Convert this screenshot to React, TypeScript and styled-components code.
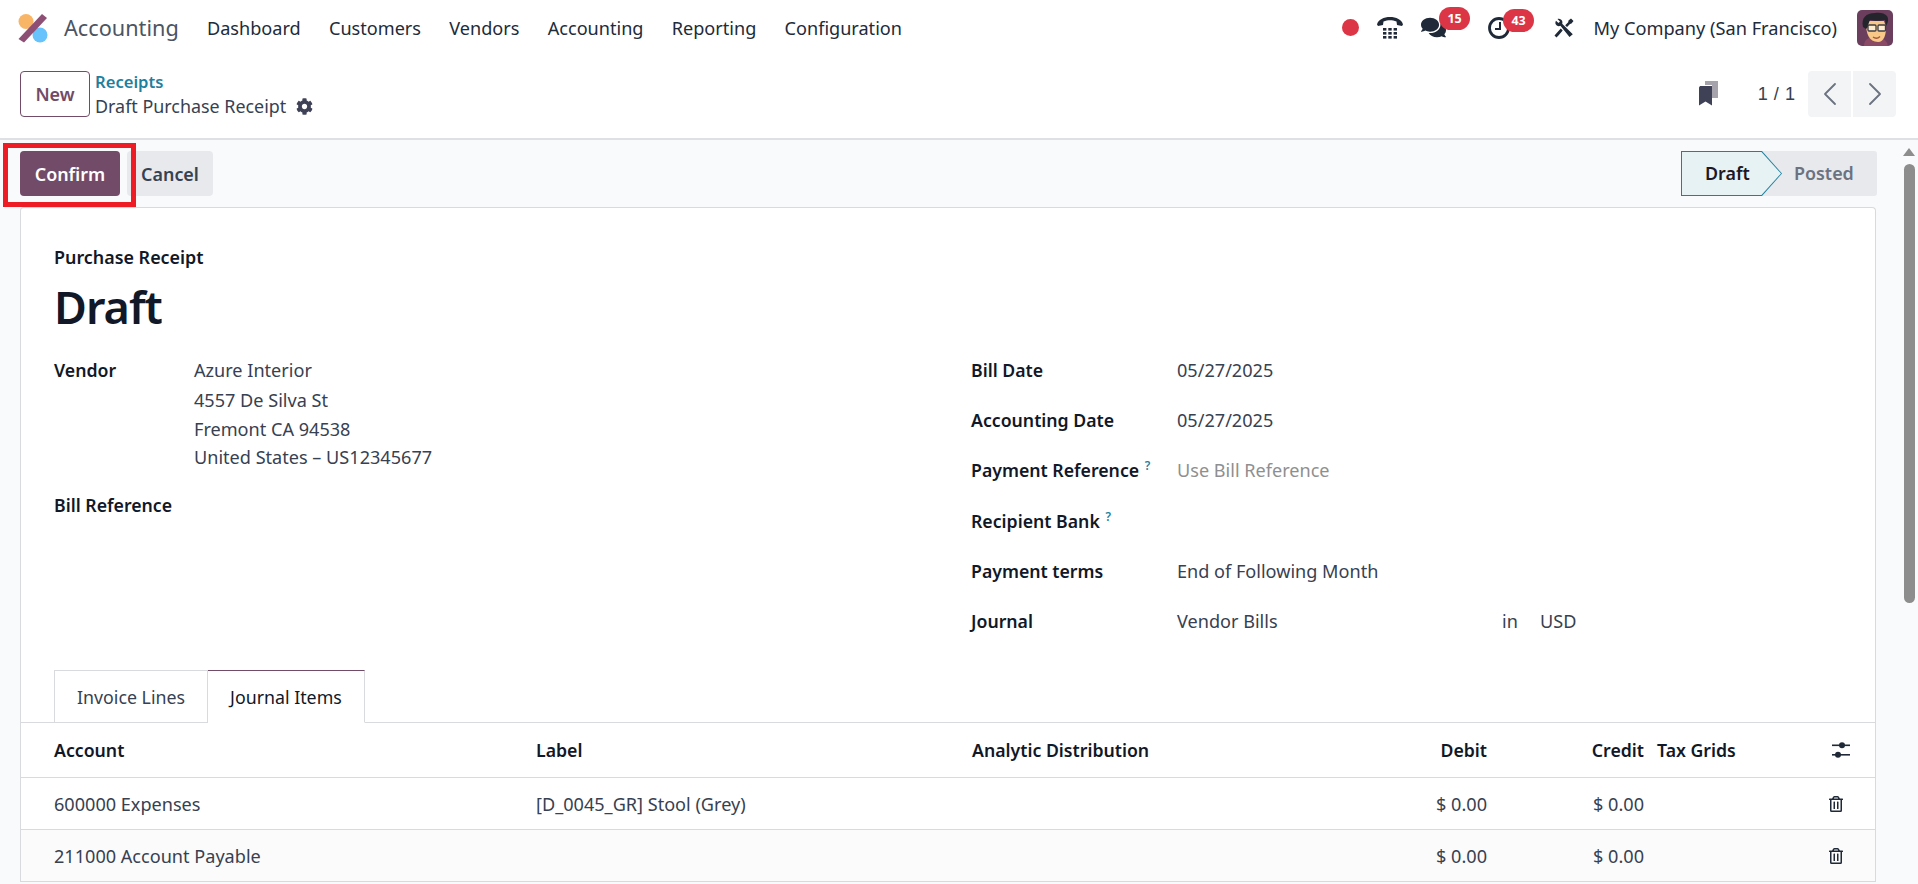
import styled, { createGlobalStyle } from 'styled-components'
import { FaCog, FaComments, FaRegTrashAlt } from 'react-icons/fa'
import { ChevronLeft, ChevronRight } from 'lucide-react'

const GlobalStyle = createGlobalStyle`
  html, body {
    margin: 0;
    height: 100%;
    overflow: hidden;
    background: #fff;
  }
  body {
    font-family: "Noto Sans", "Open Sans", sans-serif;
    font-size: 18.1px;
    color: #374151;
  }
`

const menuItems = ['Dashboard', 'Customers', 'Vendors', 'Accounting', 'Reporting', 'Configuration']

const journalLines = [
  { account: '600000 Expenses', label: '[D_0045_GR] Stool (Grey)' },
  { account: '211000 Account Payable', label: '' },
]

const Logo = () => (
  <svg width="30" height="30" viewBox="0 0 30 30">
    <circle cx="8" cy="8.5" r="7.5" fill="#f9b566" />
    <circle cx="22" cy="22" r="7.5" fill="#68c2fb" />
    <path d="M24 1 L29 5 L6 29.5 L0.5 26 Z" fill="#8e4f75" />
  </svg>
)

const PhoneIcon = () => (
  <svg width="26" height="22" viewBox="0 0 26 22" fill="#1f2937">
    <path d="M0 7.5C1 2.5 7 0 13 0s12 2.5 13 7.500l-1 1.500-5-1-.5-3.500c-2-1-4.500-1.300-6.500-1.300s-4.500.3-6.500 1.300L6 8 1 9z" />
    <rect x="6" y="11" width="3.400" height="2.600" />
    <rect x="11.300" y="11" width="3.400" height="2.600" />
    <rect x="16.600" y="11" width="3.400" height="2.600" />
    <rect x="6" y="15" width="3.400" height="2.600" />
    <rect x="11.300" y="15" width="3.400" height="2.600" />
    <rect x="16.600" y="15" width="3.400" height="2.600" />
    <rect x="6" y="19" width="3.400" height="2.600" />
    <rect x="11.300" y="19" width="3.400" height="2.600" />
    <rect x="16.600" y="19" width="3.400" height="2.600" />
  </svg>
)

const ClockIcon = () => (
  <svg width="22" height="22" viewBox="0 0 22 22" fill="none" stroke="#1f2937">
    <circle cx="11" cy="11" r="9.500" strokeWidth="2.800" />
    <path d="M12 5v7H7" strokeWidth="2" />
  </svg>
)

const ToolsIcon = () => (
  <svg width="20" height="20" viewBox="0 0 20 20" fill="#1f2937">
    <path d="M3.500 1 6 3.500 4.500 5 2 2.700C.9 4.500 1.300 6.400 2.800 7.500c1.200.8 2.500.8 3.600.3L15.500 19l3.300-2.800L8.200 5.800c.5-1.500.2-3-1-4C6 .8 4.800.6 3.500 1z" />
    <path d="M14.500 2.500 17 .5l2.500 2.500-2 2.600-1.500.4-3 3-1.800-1.800 3-3zM6.800 10.500l1.900 1.900-3.800 4.600-2.400 2.500-2-2 2.200-2.600z" />
  </svg>
)

const BookmarkIcon = () => (
  <svg width="19" height="25" viewBox="0 0 19 25">
    <path d="M6 0h13v17h-6V4H6z" fill="#a6a3ad" />
    <path d="M0 6.500 1 5h12v19.500l-6.500-4-6.500 4z" fill="#3f4257" />
  </svg>
)

const SlidersIcon = () => (
  <svg width="20" height="20" viewBox="0 0 20 20" fill="#1f2937">
    <rect x="1" y="4.500" width="18" height="1.600" />
    <circle cx="11" cy="5.300" r="3" />
    <rect x="1" y="14" width="18" height="1.600" />
    <circle cx="7" cy="14.800" r="3" />
  </svg>
)

const Avatar = () => (
  <svg width="36" height="36" viewBox="0 0 36 36">
    <rect width="36" height="36" rx="5" fill="#6a3e5c" />
    <path d="M7 36c0-6 4-9 11-9s12 3 13 9z" fill="#8a4a66" />
    <path d="M9 14c0 9 3 18 12 18 6 0 8-7 8-15l-2-6H11z" fill="#f8c888" />
    <path d="M6 17C4 8 9 3 18 3c4-1 10 0 12 3 2 3 1 7-1 10l-1-6c-4 1-11 1-15 0-1 2-2 5-2 7l-2 2z" fill="#23242c" />
    <rect x="11" y="15" width="8" height="6" rx="1" fill="#fdeccd" stroke="#3c3c44" strokeWidth="1.300" />
    <rect x="21" y="15" width="7.500" height="6" rx="1" fill="#fdeccd" stroke="#3c3c44" strokeWidth="1.300" />
    <path d="M16 27c2 1.500 5 1.500 7-.5" fill="none" stroke="#a2553e" strokeWidth="1.300" />
  </svg>
)

export default function App() {
  return (
    <Page>
      <GlobalStyle />
      <Navbar>
        <Brand>
          <Logo />
          <AppName>Accounting</AppName>
        </Brand>
        <Menu>
          {menuItems.map(item => <MenuItem key={item}>{item}</MenuItem>)}
        </Menu>
        <Systray>
          <RecordDot />
          <TrayIcon $width={26} $gap={18}><PhoneIcon /></TrayIcon>
          <TrayIcon $width={25} $gap={42}>
            <FaComments size={25} />
            <Badge $left={18}>15</Badge>
          </TrayIcon>
          <TrayIcon $width={22} $gap={44}>
            <ClockIcon />
            <Badge $left={15}>43</Badge>
          </TrayIcon>
          <TrayIcon $width={20} $gap={19}><ToolsIcon /></TrayIcon>
          <Company>My Company (San Francisco)</Company>
          <Avatar />
        </Systray>
      </Navbar>

      <ControlPanel>
        <NewButton>New</NewButton>
        <Breadcrumb>
          <CrumbLink>Receipts</CrumbLink>
          <CrumbCurrent>
            Draft Purchase Receipt
            <FaCog size={17} color="#3f4257" />
          </CrumbCurrent>
        </Breadcrumb>
        <PagerArea>
          <BookmarkIcon />
          <PagerText>1 / 1</PagerText>
          <PagerButtons>
            <PagerButton><ChevronLeft size={40} strokeWidth={1.1} /></PagerButton>
            <PagerButton><ChevronRight size={40} strokeWidth={1.1} /></PagerButton>
          </PagerButtons>
        </PagerArea>
      </ControlPanel>

      <Workspace>
        <Content>
          <StatusBar>
            <Actions>
              <Highlight>
                <ConfirmButton>Confirm</ConfirmButton>
              </Highlight>
              <CancelButton>Cancel</CancelButton>
            </Actions>
            <StatusSteps>
              <StepDraft>Draft</StepDraft>
              <StepPosted>Posted</StepPosted>
            </StatusSteps>
          </StatusBar>

          <Sheet>
            <Heading>
              <MoveType>Purchase Receipt</MoveType>
              <Title>Draft</Title>
            </Heading>
            <Groups>
              <LeftGroup>
                <FieldLabel>Vendor</FieldLabel>
                <Address>
                  <VendorName>Azure Interior</VendorName>
                  <span>4557 De Silva St</span>
                  <span>Fremont CA 94538</span>
                  <span>United States – US12345677</span>
                </Address>
                <FieldLabel>Bill Reference</FieldLabel>
              </LeftGroup>
              <RightGroup>
                <FieldLabel>Bill Date</FieldLabel>
                <FieldValue>05/27/2025</FieldValue>
                <FieldLabel>Accounting Date</FieldLabel>
                <FieldValue>05/27/2025</FieldValue>
                <FieldLabel>Payment Reference <Hint>?</Hint></FieldLabel>
                <Placeholder>Use Bill Reference</Placeholder>
                <FieldLabel>Recipient Bank <Hint>?</Hint></FieldLabel>
                <FieldValue />
                <FieldLabel>Payment terms</FieldLabel>
                <FieldValue>End of Following Month</FieldValue>
                <FieldLabel>Journal</FieldLabel>
                <JournalValue>
                  <JournalName>Vendor Bills</JournalName>
                  <JournalIn>in</JournalIn>
                  <span>USD</span>
                </JournalValue>
              </RightGroup>
            </Groups>

            <Tabs>
              <Tab>Invoice Lines</Tab>
              <Tab $active>Journal Items</Tab>
            </Tabs>

            <HeaderRow>
              <span>Account</span>
              <span>Label</span>
              <span>Analytic Distribution</span>
              <NumberCell>Debit</NumberCell>
              <NumberCell>Credit</NumberCell>
              <TaxCell>Tax Grids</TaxCell>
              <ActionCell $shift={3}><SlidersIcon /></ActionCell>
            </HeaderRow>
            {journalLines.map((line, i) => (
              <LineRow key={line.account} $striped={i % 2 === 1}>
                <span>{line.account}</span>
                <span>{line.label}</span>
                <span />
                <NumberCell>$ 0.00</NumberCell>
                <NumberCell>$ 0.00</NumberCell>
                <TaxCell />
                <ActionCell $shift={0}><FaRegTrashAlt size={16} color="#1f2937" /></ActionCell>
              </LineRow>
            ))}
          </Sheet>
        </Content>
        <Scrollbar>
          <ScrollArrow />
          <ScrollThumb />
        </Scrollbar>
      </Workspace>
    </Page>
  )
}

const Page = styled.div`
  height: 884px;
  display: flex;
  flex-direction: column;
  overflow: hidden;
`

const Navbar = styled.header`
  height: 57px;
  flex: none;
  box-sizing: border-box;
  display: flex;
  align-items: center;
  padding: 0 25px 2px 18px;
`

const Brand = styled.div`
  display: flex;
  align-items: center;
  gap: 16px;
  width: 189px;
`

const AppName = styled.span`
  font-size: 21.7px;
  color: #4b5563;
`

const Menu = styled.nav`
  display: flex;
  gap: 28.3px;
`

const MenuItem = styled.span`
  color: #212b3a;
`

const Systray = styled.div`
  margin-left: auto;
  display: flex;
  align-items: center;
`

const RecordDot = styled.span`
  width: 17px;
  height: 17px;
  border-radius: 50%;
  background: #dc3545;
  margin-right: 18px;
`

const TrayIcon = styled.span<{ $width: number; $gap: number }>`
  position: relative;
  display: flex;
  width: ${props => props.$width}px;
  margin-right: ${props => props.$gap}px;
  color: #1f2937;
`

const Badge = styled.span<{ $left: number }>`
  position: absolute;
  top: -8px;
  left: ${props => props.$left}px;
  height: 23px;
  padding: 0 8px;
  border-radius: 12px;
  background: #dc3545;
  color: #fff;
  font-size: 12.5px;
  font-weight: 700;
  line-height: 23px;
`

const Company = styled.span`
  color: #212b3a;
  font-size: 18.2px;
  margin-right: 20px;
`

const ControlPanel = styled.div`
  height: 83px;
  flex: none;
  box-sizing: border-box;
  display: flex;
  align-items: center;
  padding: 0 22px 8px 20px;
  border-bottom: 2px solid #dee0e3;
`

const NewButton = styled.button`
  width: 70px;
  height: 46px;
  border: 1px solid #714b67;
  border-radius: 4px;
  background: #fff;
  color: #714b67;
  font: 600 17.9px "Noto Sans", sans-serif;
`

const Breadcrumb = styled.div`
  display: flex;
  flex-direction: column;
  gap: 2px;
  margin-left: 5px;
`

const CrumbLink = styled.span`
  color: #1f7f9c;
  font-size: 16.6px;
  font-weight: 600;
  line-height: 23px;
`

const CrumbCurrent = styled.span`
  display: flex;
  align-items: center;
  gap: 10px;
  font-size: 17.9px;
  line-height: 23px;
`

const PagerArea = styled.div`
  margin-left: auto;
  display: flex;
  align-items: center;
`

const PagerText = styled.span`
  margin: 2px 13px 0 40px;
  font-family: "Liberation Sans", sans-serif;
  word-spacing: 1px;
`

const PagerButtons = styled.div`
  display: flex;
  gap: 2px;
`

const PagerButton = styled.span`
  width: 43px;
  height: 46px;
  display: flex;
  align-items: center;
  justify-content: center;
  background: #f3f4f6;
  color: #6b7280;
  &:first-child {
    border-radius: 4px 0 0 4px;
  }
  &:last-child {
    border-radius: 0 4px 4px 0;
  }
`

const Workspace = styled.div`
  flex: 1;
  min-height: 0;
  display: flex;
  background: #f9fafb;
`

const Content = styled.main`
  flex: 1;
  min-width: 0;
  padding: 0 24px 0 20px;
`

const StatusBar = styled.div`
  height: 67px;
  display: flex;
  align-items: flex-start;
  justify-content: space-between;
`

const Actions = styled.div`
  display: flex;
  padding-top: 11px;
  gap: 7px;
`

const Highlight = styled.div`
  position: relative;
  &::after {
    content: '';
    position: absolute;
    inset: -8px -16px -11px -17px;
    border: 5px solid #ee1c25;
    pointer-events: none;
  }
`

const ActionButton = styled.button`
  height: 45px;
  border: 0;
  border-radius: 4px;
  font: 600 17.9px "Noto Sans", sans-serif;
`

const ConfirmButton = styled(ActionButton)`
  width: 100px;
  background: #714b67;
  color: #fff;
`

const CancelButton = styled(ActionButton)`
  width: 86px;
  background: #e7e9ed;
  color: #374151;
`

const StatusSteps = styled.div`
  display: flex;
  margin: 11px -1px 0 0;
  height: 45px;
  width: 196px;
  font-size: 17.9px;
  background: #e7e9ed;
  border-radius: 0 3px 3px 0;
`

const StepDraft = styled.div`
  position: relative;
  isolation: isolate;
  width: 101px;
  height: 45px;
  padding-left: 24px;
  box-sizing: border-box;
  line-height: 45px;
  font-weight: 600;
  color: #1f1722;
  background: #1f7f9c;
  clip-path: polygon(0 0, 81px 0, 100% 50%, 81px 100%, 0 100%);
  &::before {
    content: '';
    position: absolute;
    z-index: -1;
    inset: 1px;
    background: #e6f2f3;
    clip-path: polygon(0 0, 79.500px 0, 100% 50%, 79.500px 100%, 0 100%);
  }
`

const StepPosted = styled.div`
  padding-left: 12px;
  line-height: 45px;
  font-weight: 600;
  color: #6b7280;
`

const Sheet = styled.section`
  background: #fff;
  border: 1px solid #d8dadd;
  border-bottom: 0;
  border-radius: 4px 4px 0 0;
`

const Heading = styled.div`
  padding: 37px 33px 0;
`

const MoveType = styled.div`
  font-size: 17.9px;
  font-weight: 600;
  color: #111827;
  line-height: 24px;
`

const Title = styled.h1`
  margin: 8px 0 0;
  color: #111827;
  font-size: 45px;
  font-weight: 600;
  letter-spacing: -1px;
  line-height: 60px;
`

const Groups = styled.div`
  display: grid;
  grid-template-columns: 917px 1fr;
  padding: 20.5px 33px 0;
  height: 333px;
  box-sizing: border-box;
`

const LeftGroup = styled.div`
  display: grid;
  grid-template-columns: 140px 1fr;
  align-content: start;
  line-height: 24px;
`

const RightGroup = styled.div`
  display: grid;
  grid-template-columns: 206px 1fr;
  grid-auto-rows: 26px;
  row-gap: 24.4px;
  align-content: start;
  line-height: 24px;
`

const FieldLabel = styled.div`
  font-size: 17.7px;
  font-weight: 600;
  color: #111827;
`

const FieldValue = styled.div``

const Placeholder = styled.div`
  color: #8f8f8f;
`

const Hint = styled.sup`
  color: #1f7f9c;
  font-size: 12px;
  line-height: 0;
  margin-left: 1px;
`

const Address = styled.div`
  display: flex;
  flex-direction: column;
  gap: 4.500px;
  padding-bottom: 24px;
`

const VendorName = styled.span`
  margin-bottom: 2px;
`

const JournalValue = styled.div`
  display: flex;
`

const JournalName = styled.span`
  width: 325px;
`

const JournalIn = styled.span`
  width: 38px;
`

const Tabs = styled.div`
  display: flex;
  height: 52px;
  padding-left: 33px;
  border-bottom: 1px solid #d8dadd;
`

const Tab = styled.div<{ $active?: boolean }>`
  box-sizing: border-box;
  height: 53px;
  padding: 0 22px;
  font-size: 17.8px;
  line-height: 52px;
  background: #fff;
  border: 1px solid #d8dadd;
  border-top-color: ${props => props.$active ? '#714b67' : '#d8dadd'};
  border-left-width: ${props => props.$active ? 0 : 1}px;
  border-bottom-color: ${props => props.$active ? '#fff' : '#d8dadd'};
  color: ${props => props.$active ? '#111827' : '#374151'};
`

const TableRow = styled.div`
  display: grid;
  grid-template-columns: 482px 436px 395px 120px 157px 184px 1fr;
  align-items: center;
  padding-left: 33px;
  box-sizing: border-box;
  border-bottom: 1px solid #d8dadd;
`

const HeaderRow = styled(TableRow)`
  height: 55px;
  font-size: 17.7px;
  font-weight: 600;
  color: #111827;
`

const LineRow = styled(TableRow)<{ $striped: boolean }>`
  height: 52px;
  background: ${props => props.$striped ? '#fbfbfb' : '#fff'};
`

const NumberCell = styled.span`
  text-align: right;
`

const TaxCell = styled.span`
  padding-left: 13px;
  white-space: nowrap;
`

const ActionCell = styled.span<{ $shift: number }>`
  display: flex;
  padding-left: ${props => props.$shift}px;
`

const Scrollbar = styled.div`
  width: 18px;
  flex: none;
  display: flex;
  flex-direction: column;
  align-items: center;
  padding-top: 8px;
  box-sizing: border-box;
`

const ScrollArrow = styled.span`
  width: 0;
  height: 0;
  border-left: 6px solid transparent;
  border-right: 6px solid transparent;
  border-bottom: 8px solid #8d8d8d;
`

const ScrollThumb = styled.span`
  width: 11px;
  height: 439px;
  margin-top: 8px;
  border-radius: 6px;
  background: #8d8d8d;
`
